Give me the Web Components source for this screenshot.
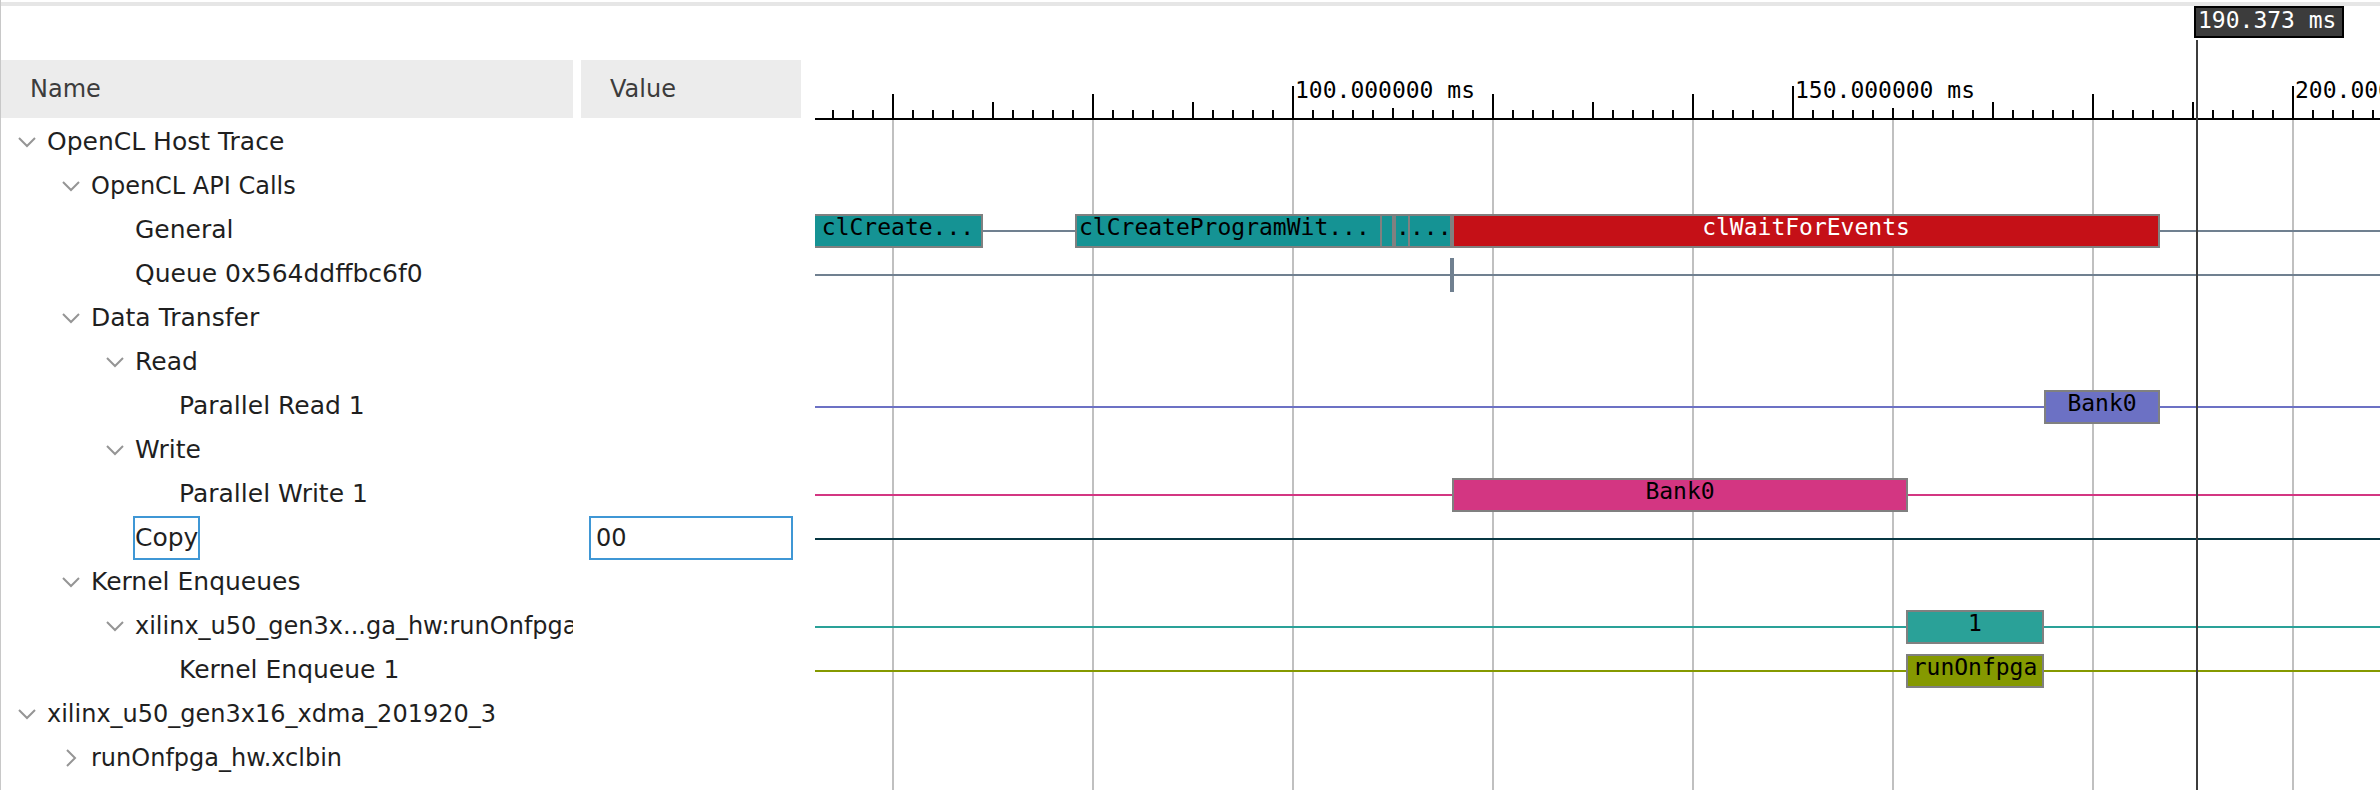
<!DOCTYPE html>
<html lang="en">
<head>
<meta charset="utf-8">
<title>Timeline Trace</title>
<style>
  body { margin: 0; background: #fff; overflow: hidden; }
</style>
</head>
<body>
<trace-viewer></trace-viewer>
<script>
const ROWS = [
  { level: 0, name: 'OpenCL Host Trace', open: true },
  { level: 1, name: 'OpenCL API Calls', open: true, compact: true },
  { level: 2, name: 'General', line: '#708090', bars: [
    { from: 815, to: 983, color: '#159394', text: 'clCreate...', cut: true },
    { from: 1075, to: 1382, color: '#159394', text: 'clCreateProgramWit...', start: true },
    { from: 1380, to: 1394, color: '#159394' },
    { from: 1394, to: 1410, color: '#159394', text: '.' },
    { from: 1408, to: 1452, color: '#159394', text: '...' },
    { from: 1452, to: 2160, color: '#c51017', text: 'clWaitForEvents', ink: '#fff' } ] },
  { level: 2, name: 'Queue 0x564ddffbc6f0', line: '#708090', bars: [
    { from: 1450, to: 1454, color: '#708090', mark: true } ] },
  { level: 1, name: 'Data Transfer', open: true },
  { level: 2, name: 'Read', open: true },
  { level: 3, name: 'Parallel Read 1', line: '#6c71c4', bars: [
    { from: 2044, to: 2160, color: '#6c71c4', text: 'Bank0' } ] },
  { level: 2, name: 'Write', open: true },
  { level: 3, name: 'Parallel Write 1', line: '#d33682', bars: [
    { from: 1452, to: 1908, color: '#d33682', text: 'Bank0' } ] },
  { level: 2, name: 'Copy', line: '#073642', value: '00', focus: true },
  { level: 1, name: 'Kernel Enqueues', open: true },
  { level: 2, name: 'xilinx_u50_gen3x...ga_hw:runOnfpga', open: true, compact: true, line: '#2aa198', bars: [
    { from: 1906, to: 2044, color: '#2aa198', text: '1' } ] },
  { level: 3, name: 'Kernel Enqueue 1', line: '#859900', bars: [
    { from: 1906, to: 2044, color: '#859900', text: 'runOnfpga' } ] },
  { level: 0, name: 'xilinx_u50_gen3x16_xdma_201920_3', open: true, compact: true },
  { level: 1, name: 'runOnfpga_hw.xclbin', open: false, compact: true }
];
const ORIGIN = 815;

class TraceTree extends HTMLElement {
  connectedCallback() {
    const root = this.attachShadow({ mode: 'open' });
    const toggle = r => r.open === undefined ? '' :
      `<button type="button" aria-expanded="${r.open}" aria-label="Toggle ${r.name}"><svg width="18" height="18" viewBox="0 0 18 18" fill="none" stroke="#959595" stroke-width="2"><path d="${r.open ? 'M1 5L9 13L17 5' : 'M5 1L13 9L5 17'}"/></svg></button>`;
    root.innerHTML = `<style>
      :host { display: block; padding-top: 54px; color: #1f1f1f; font: 24px/44px "DejaVu Sans", sans-serif; }
      table { width: 800px; border-collapse: collapse; table-layout: fixed; }
      th { height: 58px; padding: 0 0 0 29px; background: #ececec; color: #3c3c3c; font-weight: normal; text-align: left; }
      th.value { width: 220px; box-sizing: border-box; }
      th.gap { width: 8px; padding: 0; background: none; }
      tr.space td { height: 2px; }
      td { height: 44px; padding: 0; line-height: 44px; }
      .name { display: flex; overflow: hidden; white-space: nowrap; padding-left: calc(16px + var(--level) * 44px); font-size: 25px; }
      .compact { font-size: 24px; }
      button, .blank { flex: none; width: 20px; height: 44px; margin: 0 10px 0 0; padding: 0; border: 0; background: none; }
      button { display: grid; place-items: center; }
      .focus .label { box-sizing: border-box; height: 44px; line-height: 40px; border: 2px solid #3f97d5; margin-left: -2px; }
      input { display: block; box-sizing: border-box; width: 204px; height: 44px; margin: 0 8px; padding: 0 5px; border: 2px solid #3f97d5; background: #fff; color: inherit; font: inherit; line-height: 40px; }
    </style>
    <table>
      <thead><tr><th>Name</th><th class="gap"></th><th class="value">Value</th></tr></thead>
      <tbody><tr class="space"><td colspan="3"></td></tr>
      ${ROWS.map(r => `<tr><td><div class="name${r.focus ? ' focus' : ''}${r.compact ? ' compact' : ''}" style="--level:${r.level}">${toggle(r) || '<span class="blank"></span>'}<span class="label">${r.name}</span></div></td><td></td><td>${r.value ? `<input type="text" aria-label="${r.name} value" value="${r.value}">` : ''}</td></tr>`).join('')}
      </tbody>
    </table>`;
  }
}
customElements.define('trace-tree', TraceTree);

class TraceRuler extends HTMLElement {
  connectedCallback() {
    const labels = { 1292: '100.000000 ms', 1792: '150.000000 ms', 2292: '200.000000 ms' };
    let ticks = '';
    for (let x = 832; x < 4000; x += 20) {
      const tall = (x - 892) % 200 === 0;
      let h = 8;
      if (labels[x]) h = 32;
      else if (x === 1392 || x === 1892) h = 10;
      else if (tall) h = 24;
      else if ((x - 892) % 100 === 0) h = 16;
      ticks += `<i style="height:${h}px">${labels[x] ? `<span>${labels[x]}</span>` : ''}</i>`;
    }
    this.attachShadow({ mode: 'open' }).innerHTML = `<style>
      :host { display: flex; align-items: flex-end; box-sizing: border-box; height: 114px; padding-left: 17px; border-bottom: 2px solid #000; overflow: hidden; }
      i { flex: none; width: 18px; border-left: 2px solid #000; font-style: normal; white-space: nowrap; }
      span { display: block; margin-top: -9px; padding-left: 1px; line-height: 26px; }
    </style>${ticks}`;
  }
}
customElements.define('trace-ruler', TraceRuler);

class TraceLane extends HTMLElement {
  set row(row) {
    let end = ORIGIN;
    const bars = (row.bars || []).map(b => {
      const gap = b.from - end;
      end = b.to;
      const kind = ['bar', b.mark && 'mark', b.cut && 'cut', b.start && 'start'].filter(Boolean).join(' ');
      return `<div class="${kind}" style="margin-left:${gap}px;width:${b.to - b.from}px;background-color:${b.color};color:${b.ink || '#000'}">${b.text || ''}</div>`;
    }).join('');
    this.attachShadow({ mode: 'open' }).innerHTML = `<style>
      :host { display: flex; align-items: center; height: 44px; padding-top: 2px; box-sizing: border-box;
        background: linear-gradient(${row.line || 'transparent'} 0 0) 0 22px / 100% 2px no-repeat; }
      .bar { flex: none; box-sizing: border-box; height: 34px; border: 2px solid #808080; line-height: 22px; text-align: center; white-space: nowrap; overflow: hidden; }
      .start { text-align: left; padding-left: 2px; }
      .cut { border-left: 0; }
      .mark { border: 0; }
    </style>${bars}`;
  }
}
customElements.define('trace-lane', TraceLane);

class TraceTimeline extends HTMLElement {
  connectedCallback() {
    const root = this.attachShadow({ mode: 'open' });
    root.innerHTML = `<style>
      :host { display: block; position: relative; overflow: hidden; font: 23px/26px "DejaVu Sans Mono", monospace; color: #000; }
      .lanes { padding-bottom: 10px; background: repeating-linear-gradient(90deg, #c0c0c0 0 2px, transparent 2px 200px) 77px 0; }
      .cursor { position: absolute; top: 0; bottom: 0; left: 1379px; }
      output { display: block; box-sizing: border-box; width: 150px; height: 32px; padding-left: 2px; border: 2px solid #000; background: #3c3c3c; color: #fff; white-space: nowrap; line-height: 24px; }
      .stem { position: absolute; top: 34px; bottom: 0; left: 2px; width: 2px; background: #3c3c3c; }
    </style>
    <trace-ruler></trace-ruler>
    <div class="lanes"></div>
    <div class="cursor"><output>190.373 ms</output><div class="stem"></div></div>`;
    const lanes = root.querySelector('.lanes');
    for (const row of ROWS) {
      const lane = document.createElement('trace-lane');
      lane.row = row;
      lanes.append(lane);
    }
  }
}
customElements.define('trace-timeline', TraceTimeline);

class TraceViewer extends HTMLElement {
  connectedCallback() {
    this.attachShadow({ mode: 'open' }).innerHTML = `<style>
      :host { display: flex; flex-direction: column; min-height: 100vh; box-sizing: border-box; border-left: 1px solid #c8c8c8; }
      .bar { height: 4px; margin-top: 2px; background: #e6e6e6; }
      main { flex: 1; display: flex; gap: 14px; }
      trace-tree { flex: none; }
      trace-timeline { flex: 1; min-width: 0; }
    </style>
    <div class="bar"></div>
    <main><trace-tree></trace-tree><trace-timeline></trace-timeline></main>`;
  }
}
customElements.define('trace-viewer', TraceViewer);
</script>
</body>
</html>
